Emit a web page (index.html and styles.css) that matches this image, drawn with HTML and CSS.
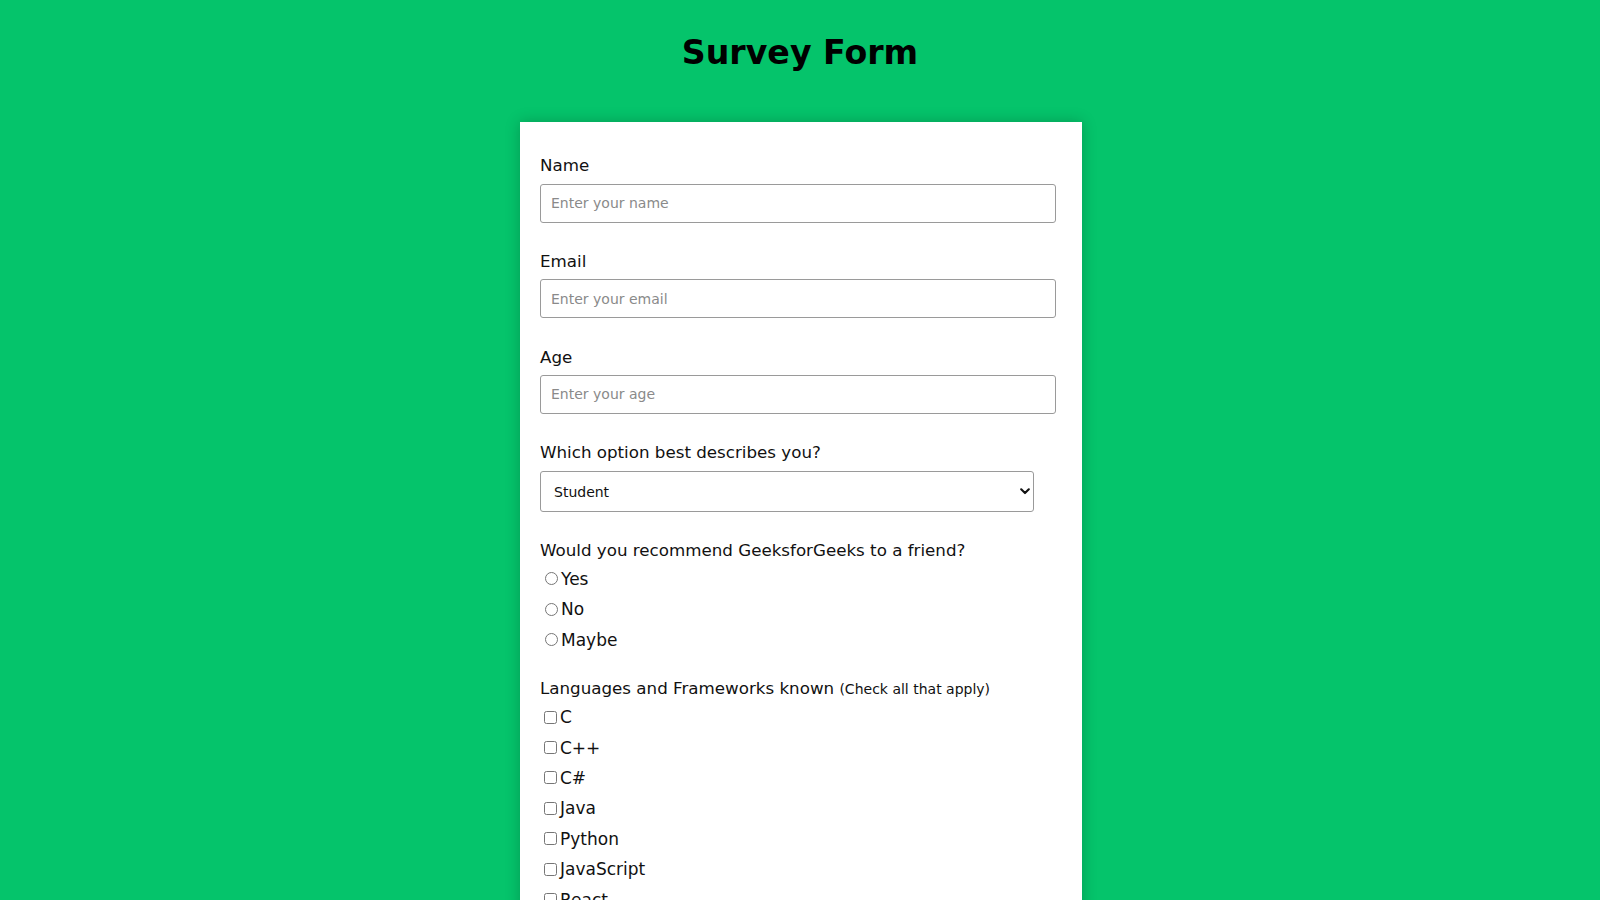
FILE: index.html
```html
<!DOCTYPE html>
<html lang="en">
<head>
<meta charset="utf-8">
<title>Survey Form</title>
<link rel="stylesheet" href="styles.css">
</head>
<body>
<header class="page-header">
  <h1 class="title">Survey Form</h1>
</header>
<main class="page">
  <form class="card">
    <div class="field">
      <label class="field-label" for="name">Name</label>
      <input class="text-input" id="name" type="text" placeholder="Enter your name">
    </div>
    <div class="field">
      <label class="field-label" for="email">Email</label>
      <input class="text-input" id="email" type="email" placeholder="Enter your email">
    </div>
    <div class="field">
      <label class="field-label" for="age">Age</label>
      <input class="text-input" id="age" type="number" placeholder="Enter your age">
    </div>
    <div class="field field-select">
      <label class="field-label select-label" for="role">Which option best describes you?</label>
      <div class="select-wrap">
        <select class="select" id="role">
          <option>Student</option>
          <option>Intern</option>
          <option>Professional</option>
          <option>Other</option>
        </select>
        <svg class="chevron" width="10" height="7" viewBox="0 0 10 7" aria-hidden="true"><path d="M1.2 1.3 L5 5.1 L8.8 1.3" fill="none" stroke="#111" stroke-width="2.1" stroke-linecap="round" stroke-linejoin="round"/></svg>
      </div>
    </div>
    <div class="field field-radios">
      <p class="field-label group-label">Would you recommend GeeksforGeeks to a friend?</p>
      <label class="option radio-option"><input type="radio" name="rec" value="yes">Yes</label>
      <label class="option radio-option"><input type="radio" name="rec" value="no">No</label>
      <label class="option radio-option"><input type="radio" name="rec" value="maybe">Maybe</label>
    </div>
    <div class="field">
      <p class="field-label group-label">Languages and Frameworks known <span class="hint">(Check all that apply)</span></p>
      <label class="option check-option"><input type="checkbox" value="c">C</label>
      <label class="option check-option"><input type="checkbox" value="cpp">C++</label>
      <label class="option check-option"><input type="checkbox" value="cs">C#</label>
      <label class="option check-option"><input type="checkbox" value="java">Java</label>
      <label class="option check-option"><input type="checkbox" value="python">Python</label>
      <label class="option check-option"><input type="checkbox" value="js">JavaScript</label>
      <label class="option check-option"><input type="checkbox" value="react">React</label>
    </div>
  </form>
</main>
</body>
</html>
```

FILE: styles.css
```css
* { box-sizing: border-box; }

html, body {
  margin: 0;
  padding: 0;
}

body {
  background: #05c46b;
  font-family: "DejaVu Sans", Verdana, sans-serif;
  color: #111;
  min-height: 100vh;
}

.page-header {
  padding-top: 33px;
  padding-bottom: 49.4px;
  text-align: center;
}

.title {
  margin: 0;
  font-size: 33.2px;
  line-height: 40px;
  font-weight: bold;
  color: #000;
}

.page {
  display: flex;
  justify-content: center;
  padding-left: 2px;
}

.card {
  width: 562px;
  background: #fff;
  padding: 32px 20px 40px 20px;
  box-shadow: 0 0 14px rgba(0, 0, 0, 0.22);
}

.field {
  margin-bottom: 27.4px;
}

.field-label {
  display: block;
  margin: 0 0 8.5px 0;
  padding-top: 1px;
  font-size: 16.7px;
  line-height: 20px;
  color: #111;
}

.text-input {
  display: block;
  width: 516.3px;
  height: 38.7px;
  padding: 0 10px;
  border: 1px solid #9a9a9a;
  border-radius: 3px;
  font-family: "DejaVu Sans", Verdana, sans-serif;
  font-size: 14px;
  color: #111;
  background: #fff;
  outline: none;
}

.text-input::placeholder {
  color: #8a8a8a;
}

.text-input::-webkit-outer-spin-button,
.text-input::-webkit-inner-spin-button {
  -webkit-appearance: none;
  margin: 0;
}

.field-select {
  margin-bottom: 26.8px;
}

.select-label {
  margin-bottom: 9.3px;
}

.select-wrap {
  position: relative;
  width: 494px;
}

.select {
  display: block;
  width: 100%;
  height: 40.8px;
  padding: 0 30px 0 13px;
  border: 1px solid #9a9a9a;
  border-radius: 3px;
  background: #fff;
  font-family: "DejaVu Sans", Verdana, sans-serif;
  font-size: 14px;
  color: #111;
  -webkit-appearance: none;
  appearance: none;
  outline: none;
}

.chevron {
  position: absolute;
  right: 4px;
  top: 17px;
  pointer-events: none;
}

.field-radios {
  margin-bottom: 21.6px;
}

.group-label {
  margin-bottom: 3.3px;
}

.option {
  display: flex;
  align-items: center;
  font-size: 17px;
  color: #111;
}

.radio-option {
  height: 30.6px;
}

.check-option {
  height: 30.4px;
}

.radio-option input {
  margin: 0 3px 0 5px;
  width: 13px;
  height: 13px;
}

.check-option input {
  margin: 0 3px 0 4px;
  width: 13px;
  height: 13px;
}

.hint {
  font-size: 14px;
}
```
